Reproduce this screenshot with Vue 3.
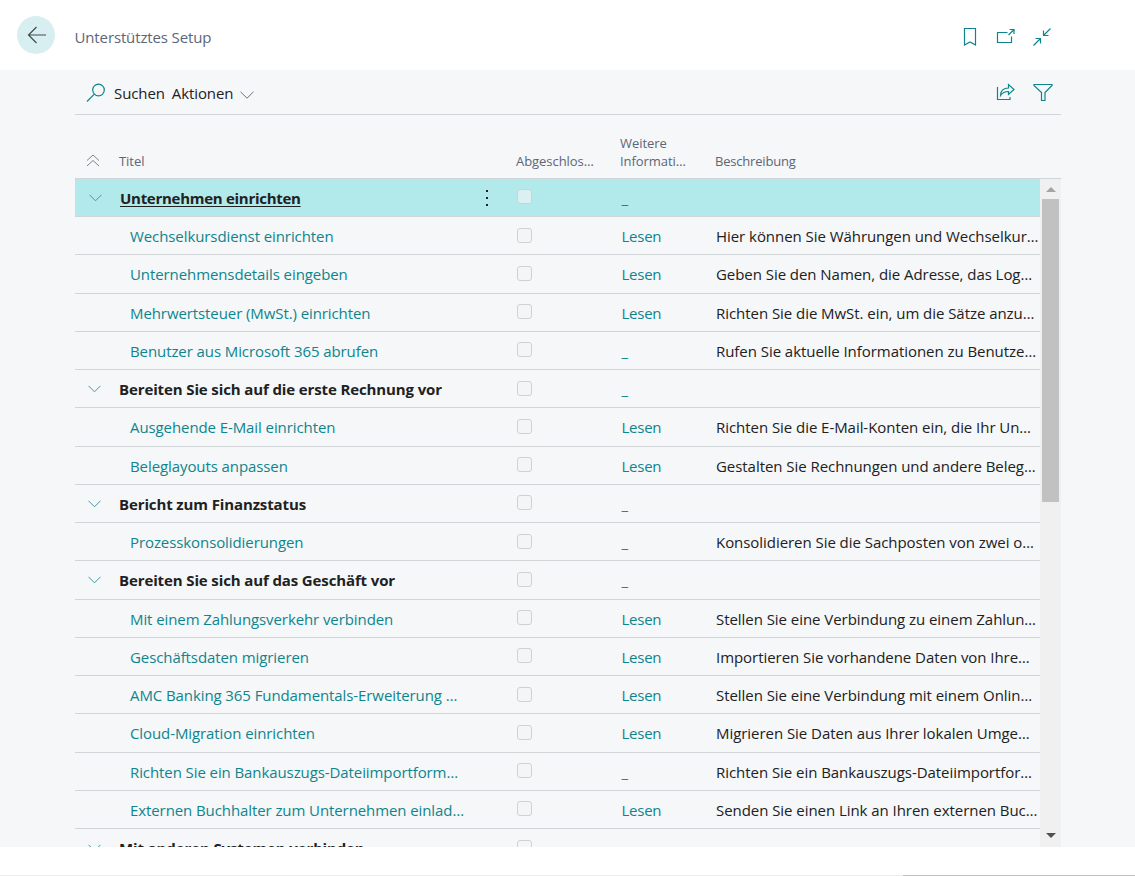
<template>
  <div class="page">
    <header class="topbar">
      <button class="back" aria-label="Zurück">
        <svg width="20" height="18" viewBox="0 0 20 18">
          <path d="M19 9H1.5M9.5 1L1.5 9l8 8" />
        </svg>
      </button>
      <h1>Unterstütztes Setup</h1>
      <div class="top-icons">
        <svg width="20" height="20" viewBox="0 0 20 20">
          <path d="M4.5 1.5h11v16.5l-5.5-3-5.5 3z" />
        </svg>
        <svg width="20" height="20" viewBox="0 0 20 20">
          <path d="M11.500 5.500H1.500v10h14V9.500M12.500 8l5-5M13.500 2.500h4.500v4.500" />
        </svg>
        <svg width="20" height="20" viewBox="0 0 20 20">
          <path d="M18.500 1.500l-7 7M11.500 3.500v5h5M1.500 18.500l7-7M3.500 11.500h5v5" />
        </svg>
      </div>
    </header>

    <main class="content">
      <!-- action bar -->
      <div class="toolbar">
        <svg class="search" width="20" height="20" viewBox="0 0 20 20">
          <circle cx="12.500" cy="7" r="5.800" />
          <path d="M8.300 11.200L1 18.500" />
        </svg>
        <span class="suchen">Suchen</span>
        <span class="aktionen">Aktionen</span>
        <svg class="caret" width="14" height="8" viewBox="0 0 14 8">
          <path d="M.5 .8l6.500 6.400L13.500 .8" />
        </svg>
        <div class="tool-icons">
          <svg width="20" height="20" viewBox="0 0 20 20">
            <path d="M1.500 5v12.500h12.500V15M4.500 13.500c0-5 3-7.500 8-7.500V2.500l5.500 5-5.500 5V9.500c-4 0-6 1-8 4z" />
          </svg>
          <svg width="20" height="20" viewBox="0 0 20 20">
            <path d="M1 2.500h18v1l-7 7v8H8.500v-8L1 3.500z" />
          </svg>
        </div>
      </div>

      <div class="row head">
        <svg class="collapse" width="14" height="13" viewBox="0 0 14 13">
          <path d="M1 6.500L7 1l6 5.500M1 12L7 6.500 13 12" />
        </svg>
        <span>Titel</span>
        <span></span>
        <span>Abgeschlos…</span>
        <span>Weitere<br />Informati…</span>
        <span class="desc-head">Beschreibung</span>
      </div>

      <div class="list">
        <div class="rows">
          <div
            v-for="(row, index) in rows"
            :key="index"
            :class="['row', 'item', { group: row.group, selected: index === selectedIndex }]"
          >
            <svg v-if="row.group" class="chevron" width="13" height="8" viewBox="0 0 13 8">
              <path d="M.5 .8l6 6L12.500 .8" />
            </svg>
            <span v-else></span>
            <span class="title">{{ row.title }}</span>
            <span class="menu"><i v-if="index === selectedIndex"></i></span>
            <span class="check"><b></b></span>
            <span class="info">{{ row.read ? 'Lesen' : '_' }}</span>
            <span class="desc">{{ row.desc }}</span>
          </div>
        </div>
        <div class="scrollbar">
          <svg class="up" width="10" height="5" viewBox="0 0 10 5"><path d="M0 5L5 0l5 5z" /></svg>
          <div class="thumb"></div>
          <svg class="down" width="10" height="5" viewBox="0 0 10 5"><path d="M0 0l5 5 5-5z" /></svg>
        </div>
      </div>
    </main>
    <footer class="bottom"><div></div></footer>
  </div>
</template>

<script setup>
import { ref } from "vue";

const selectedIndex = ref(0);

const rows = [
  { group: true, title: "Unternehmen einrichten" },
  { title: "Wechselkursdienst einrichten", read: true, desc: "Hier können Sie Währungen und Wechselkur…" },
  { title: "Unternehmensdetails eingeben", read: true, desc: "Geben Sie den Namen, die Adresse, das Log…" },
  { title: "Mehrwertsteuer (MwSt.) einrichten", read: true, desc: "Richten Sie die MwSt. ein, um die Sätze anzu…" },
  { title: "Benutzer aus Microsoft 365 abrufen", desc: "Rufen Sie aktuelle Informationen zu Benutze…" },
  { group: true, title: "Bereiten Sie sich auf die erste Rechnung vor" },
  { title: "Ausgehende E-Mail einrichten", read: true, desc: "Richten Sie die E-Mail-Konten ein, die Ihr Un…" },
  { title: "Beleglayouts anpassen", read: true, desc: "Gestalten Sie Rechnungen und andere Beleg…" },
  { group: true, title: "Bericht zum Finanzstatus" },
  { title: "Prozesskonsolidierungen", desc: "Konsolidieren Sie die Sachposten von zwei o…" },
  { group: true, title: "Bereiten Sie sich auf das Geschäft vor" },
  { title: "Mit einem Zahlungsverkehr verbinden", read: true, desc: "Stellen Sie eine Verbindung zu einem Zahlun…" },
  { title: "Geschäftsdaten migrieren", read: true, desc: "Importieren Sie vorhandene Daten von Ihre…" },
  { title: "AMC Banking 365 Fundamentals-Erweiterung …", read: true, desc: "Stellen Sie eine Verbindung mit einem Onlin…" },
  { title: "Cloud-Migration einrichten", read: true, desc: "Migrieren Sie Daten aus Ihrer lokalen Umge…" },
  { title: "Richten Sie ein Bankauszugs-Dateiimportform…", desc: "Richten Sie ein Bankauszugs-Dateiimportfor…" },
  { title: "Externen Buchhalter zum Unternehmen einlad…", read: true, desc: "Senden Sie einen Link an Ihren externen Buc…" },
  { group: true, title: "Mit anderen Systemen verbinden" },
];
</script>

<style>
body {
  margin: 0;
  background: #fff;
}
</style>

<style scoped>
.page {
  display: flex;
  flex-direction: column;
  width: 1135px;
  height: 876px;
  overflow: hidden;
  box-sizing: border-box;
  font-family: "Open Sans", "Noto Sans", sans-serif;
  font-size: 15px;
  color: #212121;
}

svg {
  display: block;
  fill: none;
  stroke: #0e858d;
  stroke-width: 1.2;
}

.topbar {
  display: flex;
  height: 70px;
  flex: none;
}

.back {
  display: flex;
  align-items: center;
  justify-content: center;
  width: 38px;
  height: 38px;
  margin: 16px 0 0 17px;
  padding: 0;
  border: 0;
  border-radius: 50%;
  background: #d8eff1;
}

.back svg {
  margin-left: 1px;
  stroke: #424c4c;
}

h1 {
  margin: 26px 0 0 19.5px;
  font-size: 15px;
  line-height: 22px;
  font-weight: 400;
  letter-spacing: -0.13px;
  color: #5c6678;
}

.top-icons {
  display: flex;
  gap: 16px;
  margin: 27px 83px 0 auto;
}

.content {
  display: flex;
  flex-direction: column;
  height: 777px;
  flex: none;
  padding: 0 74px 0 75px;
  background: #f5f7f9;
  overflow: hidden;
}

.toolbar {
  display: flex;
  align-items: center;
  height: 44px;
  flex: none;
  padding: 0 8px 0 11px;
  border-bottom: 1px solid #d2d5d8;
}

.search {
  margin-top: 1px;
}

.toolbar > span {
  padding-top: 2px;
  letter-spacing: -0.1px;
}

.suchen {
  margin-left: 8px;
}

.aktionen {
  margin-left: 7px;
}

.caret {
  margin: 5px 0 0 7px;
  stroke: #62747a;
  stroke-width: 1;
}

.tool-icons {
  display: flex;
  gap: 17px;
  margin-left: auto;
}

.row {
  display: grid;
  grid-template-columns: 44px 344px 53px 104px 94px 1fr;
  white-space: nowrap;
}

.head {
  height: 62.9px;
  flex: none;
  align-items: end;
  border-bottom: 1px solid #d2d5d8;
  font-size: 13px;
  line-height: 18px;
  letter-spacing: -0.05px;
  color: #5c6678;
}

.head > span {
  padding-bottom: 8px;
}

.head .desc-head {
  padding-left: 1px;
  letter-spacing: -0.2px;
}

.collapse {
  margin: 0 0 11px 11px;
  stroke: #7d858d;
  stroke-width: 1;
}

.list {
  display: flex;
  flex: 1;
  min-height: 0;
}

.rows {
  width: 965px;
  overflow: hidden;
}

.item {
  align-items: center;
  height: 38.25px;
  box-sizing: border-box;
  border-bottom: 1px solid #d2d5d8;
}

.title,
.info,
.desc {
  padding-top: 0.7px;
}

.title {
  padding-left: 11px;
  letter-spacing: -0.09px;
  color: #0e858d;
}

.group .title {
  padding-left: 0;
  font-weight: 700;
  letter-spacing: -0.12px;
  color: #212121;
}

.selected {
  background: #b2e9eb;
}

.selected .title {
  padding-left: 1px;
  letter-spacing: -0.28px;
  text-decoration: underline;
  text-underline-offset: 2px;
}

.chevron {
  margin-left: 13px;
  stroke: #3f9ba1;
  stroke-width: 1;
}

.selected .chevron {
  margin-left: 14px;
}

.menu i {
  display: block;
  width: 2px;
  height: 2px;
  margin-left: 23px;
  background: #212121;
  box-shadow: 0 -7px #212121, 0 7px #212121;
}

.check b {
  display: block;
  width: 15px;
  height: 15px;
  margin: -1.4px 0 0 1px;
  box-sizing: border-box;
  border: 1px solid #cfd1d2;
  border-radius: 3px;
  background: #f5f5f5;
}

.selected .check b {
  background: #dcf0f2;
}

.info {
  padding-left: 1.5px;
  letter-spacing: -0.25px;
  color: #0e858d;
}

.desc {
  padding-left: 2px;
  letter-spacing: -0.05px;
}

.scrollbar {
  display: flex;
  flex-direction: column;
  align-items: center;
  width: 21px;
  background: #f0f0f0;
}

.scrollbar svg {
  stroke: none;
}

.up {
  margin-top: 8px;
  fill: #a3a3a3;
}

.thumb {
  width: 17px;
  height: 303px;
  margin-top: 7px;
  background: #c1c1c1;
}

.down {
  margin: auto 0 9px;
  fill: #505050;
}

.bottom {
  display: flex;
  justify-content: flex-end;
  margin-top: 28px;
  height: 1px;
  background: #ececec;
}

.bottom div {
  width: 232px;
  background: #c1c1c1;
}
</style>
